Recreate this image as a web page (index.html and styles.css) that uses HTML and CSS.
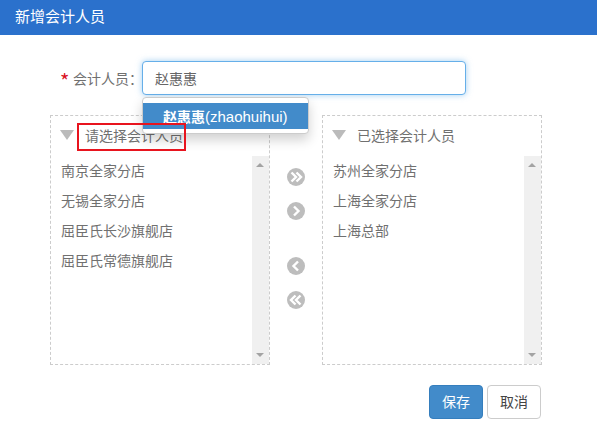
FILE: index.html
```html
<!DOCTYPE html>
<html lang="zh-CN">
<head>
<meta charset="UTF-8">
<meta name="viewport" content="width=device-width, initial-scale=1.0">
<title>新增会计人员</title>
<link rel="stylesheet" href="styles.css">
</head>
<body>

<div class="dialog">
  <div class="dialog-title">新增会计人员</div>

  <div class="dialog-body">
    <div class="form-row">
      <span class="required">*</span>
      <label class="form-label">会计人员<span class="colon">：</span></label>
      <div class="input-wrap">
        <input type="text" class="form-input" value="赵惠惠">
        <div class="suggest">
          <div class="suggest-item"><b>赵惠惠</b><span class="suggest-py">(zhaohuihui)</span></div>
        </div>
      </div>
    </div>

    <div class="transfer">
      <div class="panel">
        <div class="panel-head">
          <span class="caret"></span>
          <span>请选择会计人员</span>
          <span class="mark"></span>
        </div>
        <div class="panel-list">
          <ul class="items">
            <li>南京全家分店</li>
            <li>无锡全家分店</li>
            <li>屈臣氏长沙旗舰店</li>
            <li>屈臣氏常德旗舰店</li>
          </ul>
          <div class="scrollbar"><span class="arrow-up"></span><span class="arrow-down"></span></div>
        </div>
      </div>

      <div class="moves">
        <svg class="move" viewBox="0 0 18 18"><circle cx="9" cy="9" r="9"/><path d="M4.500 4.500L9 9l-4.500 4.500M9.500 4.500L14 9l-4.500 4.500"/></svg>
        <svg class="move" viewBox="0 0 18 18"><circle cx="9" cy="9" r="9"/><path d="M7 4.500L11.500 9 7 13.500"/></svg>
        <svg class="move move-gap" viewBox="0 0 18 18"><circle cx="9" cy="9" r="9"/><path d="M11 4.500L6.500 9l4.500 4.500"/></svg>
        <svg class="move" viewBox="0 0 18 18"><circle cx="9" cy="9" r="9"/><path d="M8.500 4.500L4 9l4.500 4.500M13.500 4.500L9 9l4.500 4.500"/></svg>
      </div>

      <div class="panel">
        <div class="panel-head">
          <span class="caret"></span>
          <span>已选择会计人员</span>
        </div>
        <div class="panel-list">
          <ul class="items">
            <li>苏州全家分店</li>
            <li>上海全家分店</li>
            <li>上海总部</li>
          </ul>
          <div class="scrollbar"><span class="arrow-up"></span><span class="arrow-down"></span></div>
        </div>
      </div>
    </div>

    <div class="actions">
      <button type="button" class="btn btn-save">保存</button>
      <button type="button" class="btn">取消</button>
    </div>
  </div>
</div>

</body>
</html>
```

FILE: styles.css
```css
* {
  box-sizing: border-box;
}

body {
  margin: 0;
  background-color: #fff;
  color: #707070;
  font-family: "Noto Sans CJK SC", "Liberation Sans", sans-serif;
  font-size: 14px;
}

.dialog {
  width: 597px;
  height: 437px;
  overflow: hidden;
}

.dialog-title {
  height: 35px;
  line-height: 32px;
  padding-left: 15px;
  background-color: #2b71cc;
  color: #fff;
  font-size: 15px;
}

.dialog-body {
  padding: 26px 55px 0 50px;
}

.form-row {
  display: flex;
  align-items: center;
  height: 34px;
  padding-left: 10px;
}

.required {
  width: 13px;
  color: #d9121f;
  font-size: 20px;
  line-height: 34px;
  padding-top: 5px;
}

.form-label {
  width: 69px;
  font-size: 14px;
  white-space: nowrap;
}

/* centred full-width colon, as in the original */
.colon {
  font-family: "Noto Sans CJK TC", sans-serif;
}

.input-wrap {
  position: relative;
  width: 324px;
  height: 34px;
}

.form-input {
  display: block;
  width: 100%;
  height: 100%;
  padding: 0 12px;
  border: 1px solid #66afe9;
  border-radius: 4px;
  outline: none;
  box-shadow: 0 0 6px rgba(102, 175, 233, .6);
  color: #666;
  font-family: inherit;
  font-size: 14px;
}

.suggest {
  position: absolute;
  top: 36px;
  left: 0;
  width: 167px;
  height: 37px;
  padding-top: 5px;
  background-color: #fff;
  border: 1px solid #ccc;
  border-radius: 4px;
  box-shadow: 0 6px 12px rgba(0, 0, 0, .18);
  z-index: 2;
}

.suggest-item {
  height: 26px;
  line-height: 26px;
  padding-left: 20px;
  background-color: #428bca;
  color: #fff;
  font-size: 14px;
  white-space: nowrap;
}

.suggest-py {
  font-family: "Liberation Sans", sans-serif;
  font-size: 15px;
}

.transfer {
  display: flex;
  margin-top: 20px;
}

.panel {
  width: 220px;
  height: 250px;
  border: 1px dashed #ccc;
  display: flex;
  flex-direction: column;
}

.panel-head {
  position: relative;
  display: flex;
  align-items: center;
  height: 40px;
  padding: 0 0 3px 9px;
}

.caret {
  width: 0;
  height: 0;
  margin-right: 11px;
  border-left: 7px solid transparent;
  border-right: 7px solid transparent;
  border-top: 10px solid #bbb;
}

/* red annotation from the original screenshot */
.mark {
  position: absolute;
  top: 7px;
  left: 26px;
  width: 109px;
  height: 28px;
  border: 2px solid #e8141e;
  z-index: 3;
}

.panel-list {
  flex: 1;
  display: flex;
  min-height: 0;
}

.items {
  flex: 1;
  margin: 0;
  padding: 0 0 0 10px;
  list-style: none;
}

.items li {
  height: 30px;
  line-height: 28px;
}

.scrollbar {
  position: relative;
  width: 17px;
  background-color: #f0f0f0;
}

.arrow-up,
.arrow-down {
  position: absolute;
  left: 4px;
  width: 0;
  height: 0;
  border-left: 4px solid transparent;
  border-right: 4px solid transparent;
}

.arrow-up {
  top: 7px;
  border-bottom: 4px solid #a3a3a3;
}

.arrow-down {
  bottom: 7px;
  border-top: 4px solid #a3a3a3;
}

.moves {
  width: 52px;
  display: flex;
  flex-direction: column;
  align-items: center;
  padding-top: 53px;
}

.move {
  width: 18px;
  height: 18px;
  margin-bottom: 16px;
}

.move-gap {
  margin-top: 21px;
}

.move circle {
  fill: #bdbdbd;
}

.move path {
  fill: none;
  stroke: #fff;
  stroke-width: 2.4;
}

.actions {
  display: flex;
  justify-content: flex-end;
  gap: 4px;
  margin-top: 20px;
  padding-right: 1px;
}

.btn {
  width: 54px;
  height: 34px;
  padding: 0 0 3px;
  background-color: #fff;
  border: 1px solid #ccc;
  border-radius: 4px;
  color: #444;
  font-family: inherit;
  font-size: 14px;
}

.btn-save {
  background-color: #428bca;
  border-color: #357ebd;
  color: #fff;
}
```
